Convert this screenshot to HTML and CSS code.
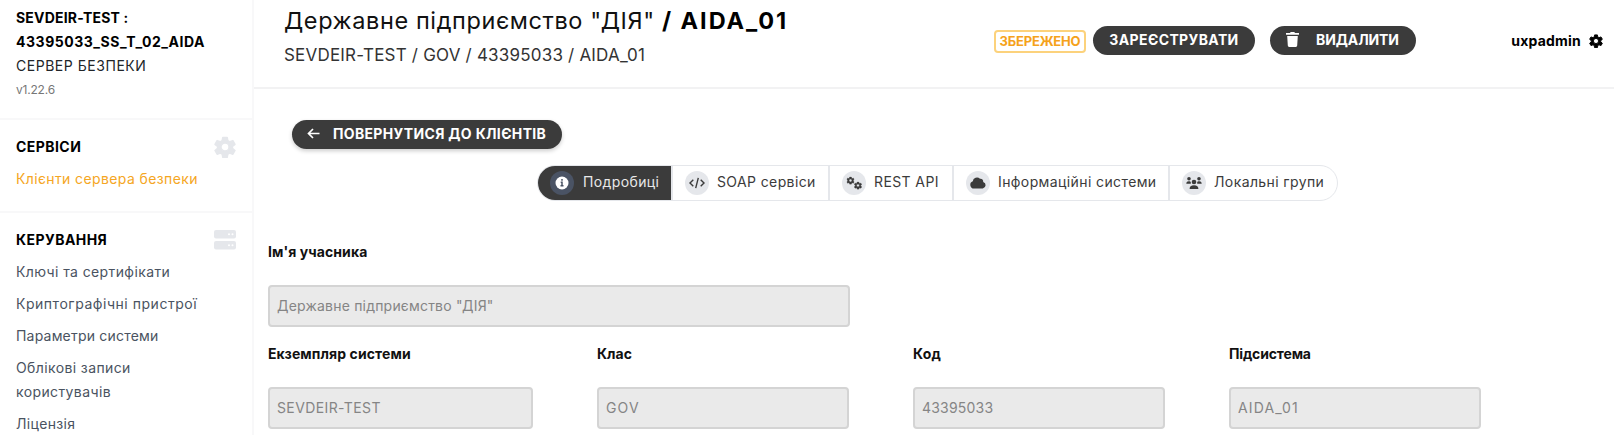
FILE: index.html
```
<!DOCTYPE html>
<html lang="uk">
<head>
<meta charset="utf-8">
<title>AIDA_01 – сервер безпеки</title>
<link rel="stylesheet" href="styles.css">
</head>
<body>
<svg class="defs" width="0" height="0">
  <symbol id="gear" viewBox="0 0 24 24"><path fill-rule="evenodd" stroke="currentColor" stroke-width="1.6" stroke-linejoin="round" fill="currentColor" d="M9.6 1.5h4.8l.7 3.6 2 1.2 3.5-1.3 2.3 4.1-2.8 2.4v1.9l2.8 2.4-2.3 4.1-3.5-1.3-2 1.2-.7 3.6H9.6l-.7-3.6-2-1.2-3.500 1.300L1.100 15.800l2.800-2.400v-1.900L1.100 9.100l2.300-4.100 3.500 1.300 2-1.200zM12 7.600a4.400 4.400 0 1 0 0 8.800 4.400 4.400 0 0 0 0-8.800z"/></symbol>
</svg>
<div class="app">
  <aside class="sidebar">
    <div class="server">
      <div class="bold ls-2">SEVDEIR-TEST :</div>
      <div class="bold ls-5">43395033_SS_T_02_AIDA</div>
      <div class="ls-5">СЕРВЕР БЕЗПЕКИ</div>
      <div class="version">v1.22.6</div>
    </div>
    <section class="group group-services">
      <div class="group-head"><h2>СЕРВІСИ</h2><svg class="head-icon gear-icon"><use href="#gear"/></svg></div>
      <a class="item active ls-4">Клієнти сервера безпеки</a>
    </section>
    <section class="group">
      <div class="group-head"><h2>КЕРУВАННЯ</h2>
        <svg class="head-icon" viewBox="0 0 22 20"><rect width="22" height="8.600" rx="2" fill="currentColor"/><rect y="11" width="22" height="8.600" rx="2" fill="currentColor"/><g fill="#fff"><circle cx="15" cy="4.300" r="1"/><circle cx="18.500" cy="4.300" r="1"/><circle cx="15" cy="15.300" r="1"/><circle cx="18.500" cy="15.300" r="1"/></g></svg>
      </div>
      <a class="item ls-4">Ключі та сертифікати</a>
      <a class="item ls-5">Криптографічні пристрої</a>
      <a class="item ls-2">Параметри системи</a>
      <a class="item ls-4">Облікові записи<br>користувачів</a>
      <a class="item ls-3">Ліцензія</a>
    </section>
  </aside>
  <main class="main">
    <header class="header">
      <div class="heading">
        <h1><span class="org">Державне підприємство "ДІЯ"</span><b>/ AIDA_01</b></h1>
        <div class="path">SEVDEIR-TEST / GOV / 43395033 / AIDA_01</div>
      </div>
      <span class="badge">ЗБЕРЕЖЕНО</span>
      <button class="btn btn-register">ЗАРЕЄСТРУВАТИ</button>
      <button class="btn btn-delete"><svg width="13" height="15" viewBox="0 0 13 15"><path fill="#fff" d="M0 1h4l.7-1h3.600L9 1h4v1.800H0zM1.200 4h10.600l-.6 9.600A1.400 1.400 0 0 1 9.800 15H3.200a1.400 1.400 0 0 1-1.400-1.400z"/></svg><span>ВИДАЛИТИ</span></button>
      <div class="user"><span>uxpadmin</span><svg width="14" height="14"><use href="#gear"/></svg></div>
    </header>
    <div class="content">
      <button class="btn btn-back"><svg width="13" height="11" viewBox="0 0 13 11"><path d="M6 1 1.500 5.500 6 10M1.500 5.500h11" fill="none" stroke="#fff" stroke-width="1.700"/></svg><span>ПОВЕРНУТИСЯ ДО КЛІЄНТІВ</span></button>
      <nav class="tabs">
        <a class="tab tab-details"><i><svg viewBox="0 0 24 24"><circle cx="12" cy="12" r="6.500" fill="#fff"/><path d="M12 8v1.800M10.700 11.200H12v3.600m-1.500 0h3" stroke="#4a5364" stroke-width="1.500" fill="none"/></svg></i><span>Подробиці</span></a>
        <a class="tab tab-soap"><i><svg viewBox="0 0 24 24"><path d="M8.300 8.800 5 12l3.300 3.200M15.700 8.800 19 12l-3.300 3.200M13.300 6.800l-2.600 10.400" stroke="#3b3b3b" stroke-width="1.400" fill="none"/></svg></i><span>SOAP сервіси</span></a>
        <a class="tab tab-rest"><i><svg viewBox="0 0 24 24" color="#3b3b3b"><use href="#gear" x="4.500" y="5.500" width="8" height="8"/><use href="#gear" x="12" y="10.500" width="8" height="8"/></svg></i><span>REST API</span></a>
        <a class="tab tab-info"><i><svg viewBox="0 0 24 24"><path fill="#3b3b3b" d="M8 17.500a3.700 3.700 0 0 1-1.200-7.200A4.200 4.200 0 0 1 14 7.700a2.700 2.700 0 0 1 3.200 3.200A3.400 3.400 0 0 1 16.800 17.500z"/></svg></i><span>Інформаційні системи</span></a>
        <a class="tab tab-groups"><i><svg viewBox="0 0 24 24" fill="#3b3b3b"><circle cx="7" cy="7.800" r="1.800"/><circle cx="17" cy="7.800" r="1.800"/><circle cx="12" cy="11" r="2.300"/><path d="M4.300 12.800c0-1.700 1-2.500 2.500-2.500 1 0 1.800.3 2 .8v1.700zM19.700 12.800c0-1.700-1-2.500-2.500-2.500-1 0-1.800.3-2 .8v1.700zM7.600 18c0-2.600 1.400-3.800 4.400-3.800s4.400 1.200 4.400 3.800z"/></svg></i><span>Локальні групи</span></a>
      </nav>
      <div class="fields">
        <label class="field wide"><span class="ls-1">Ім'я учасника</span><input class="ls-2" disabled value='Державне підприємство "ДІЯ"'></label>
        <label class="field"><span class="ls-1">Екземпляр системи</span><input class="ls-4" disabled value="SEVDEIR-TEST"></label>
        <label class="field"><span>Клас</span><input class="ls-10" disabled value="GOV"></label>
        <label class="field"><span class="ls-2">Код</span><input class="ls-2" disabled value="43395033"></label>
        <label class="field"><span class="ls-n2">Підсистема</span><input class="ls-10" disabled value="AIDA_01"></label>
      </div>
    </div>
  </main>
</div>
</body>
</html>
```
FILE: styles.css
```
* { box-sizing: border-box; }
body { margin: 0; height: 435px; overflow: hidden; background: #fff; color: #212529; font: 14px/24px Inter, "Open Sans", sans-serif; }
.defs { display: block; }
svg { display: block; flex: none; fill: currentColor; }
.bold { font-weight: 700; color: #000; }
.ls-n2 { letter-spacing: -.16px; }
.ls-1 { letter-spacing: .1px; }
.ls-2 { letter-spacing: .2px; }
.ls-3 { letter-spacing: .32px; }
.ls-4 { letter-spacing: .39px; }
.ls-5 { letter-spacing: .53px; }
.ls-10 { letter-spacing: 1.12px; }

.app { display: flex; height: 435px; }
.sidebar { width: 254px; flex: none; border-right: 2px solid #f8f8f9; }
.server { height: 120px; padding: 6px 16px 0; border-bottom: 2px solid #f8f8f9; }
.version { font-size: 12px; color: #777; letter-spacing: -.2px; }
.group { padding: 15px 16px 0; }
.group-services { height: 93px; border-bottom: 2px solid #f8f8f9; }
.group-head { display: flex; justify-content: space-between; align-items: center; height: 24px; margin-bottom: 8px; }
.group h2 { margin: 0; font-size: 14px; font-weight: 700; color: #000; letter-spacing: .45px; }
.head-icon { width: 22px; height: 20px; color: #e5e7eb; }
.gear-icon { height: 22px; }
.item { display: block; margin-bottom: 8px; color: #4a5361; white-space: nowrap; }
.item.active { color: #f5a623; }

.main { flex: 1; min-width: 0; }
.header { display: flex; align-items: flex-start; height: 89px; padding: 0 11px 0 30px; border-bottom: 2px solid #f2f2f3; }
.heading { width: 710px; flex: none; padding-top: 5px; white-space: nowrap; }
h1 { margin: 0; font-size: 23.500px; line-height: 32px; font-weight: 400; color: #111; display: flex; }
.org { width: 378px; letter-spacing: .6px; }
h1 b { color: #000; letter-spacing: 1.950px; }
.path { margin-top: 6px; font-size: 17px; color: #333; letter-spacing: .2px; }
.badge { margin-top: 30px; width: 92px; height: 23px; border: 2px solid #fcd27c; border-radius: 4px; text-align: center; font-size: 13px; font-weight: 700; line-height: 18px; color: #f5a21b; letter-spacing: -.19px; }
.btn { display: flex; align-items: center; height: 29px; border: 0; border-radius: 15px; background: #3b3b3b; color: #fff; font: 700 14px/24px Inter, sans-serif; padding: 0 0 2px; white-space: nowrap; }
.btn-register { margin: 26px 0 0 7px; width: 162px; justify-content: center; letter-spacing: .38px; }
.btn-delete { margin: 26px 0 0 15px; width: 146px; padding-left: 16px; gap: 17px; letter-spacing: -.1px; }
.user { margin: 29px 0 0 auto; display: flex; align-items: center; gap: 8px; color: #000; font-weight: 700; letter-spacing: .2px; }

.content { padding: 31px 0 0 14px; }
.btn-back { margin-left: 24px; width: 270px; padding-left: 15px; gap: 13px; letter-spacing: .34px; box-shadow: 0 2px 4px rgba(0, 0, 0, .2); }
.tabs { display: flex; width: 801px; height: 36px; margin: 16px 0 0 269px; border: 1px solid #e5e7eb; border-radius: 18px; overflow: hidden; }
.tab { display: flex; align-items: center; gap: 8px; padding-left: 12px; border-left: 2px solid #e5e7eb; color: #3b3b3b; letter-spacing: .39px; white-space: nowrap; }
.tab i { width: 24px; height: 24px; border-radius: 50%; background: #e5e7eb; }
.tab span { padding-bottom: 2px; }
.tab-details { width: 133px; border: 0; padding-left: 12px; gap: 9px; background: #3b3b3b; color: #e8e8e8; }
.tab-details i { background: #4a5364; }
.tab-soap { width: 157px; }
.tab-rest { width: 124px; }
.tab-info { width: 216px; }
.tab-groups { flex: 1; }

.fields { display: grid; grid-template-columns: 265px 252px 252px 252px; column-gap: 64px; row-gap: 15px; margin-top: 39px; }
.field { display: block; }
.field span { display: block; height: 24px; margin-bottom: 21px; font-weight: 700; color: #111; }
.wide { grid-column: 1 / 5; }
.wide input { width: 582px; }
.field input { display: block; height: 42px; padding: 0 7px 2px; border: 2px solid #d4d4d4; border-radius: 4px; background: #eaeaea; color: #858585; font-family: Inter, sans-serif; font-size: 14px; }
.field:not(.wide) input { width: 100%; }
```
